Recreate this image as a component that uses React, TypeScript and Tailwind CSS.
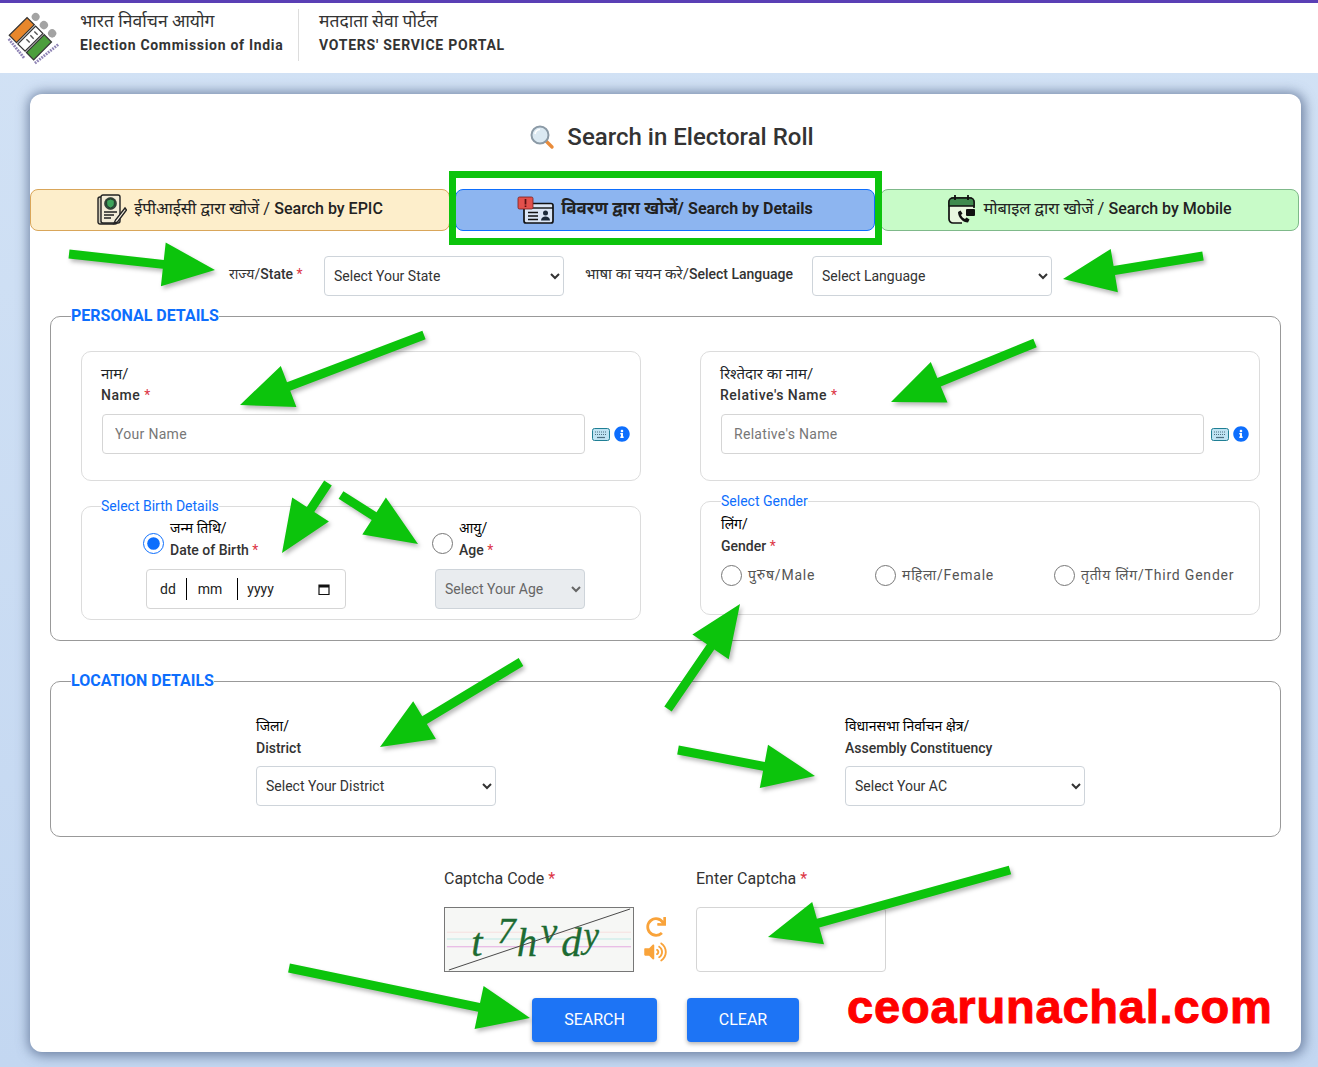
import { FaInfoCircle, FaRedo, FaVolumeUp } from "react-icons/fa";

// tail -> tip polygon for the green annotation arrows
function arrowPoints(x1: number, y1: number, x2: number, y2: number, head = 52, headW = 44, shaft = 9) {
    const len = Math.hypot(x2 - x1, y2 - y1);
    const ux = (x2 - x1) / len;
    const uy = (y2 - y1) / len;
    const nx = -uy;
    const ny = ux;
    const bx = x2 - ux * head;
    const by = y2 - uy * head;
    const pts = [
        [x1 + (nx * shaft) / 2, y1 + (ny * shaft) / 2],
        [bx + (nx * shaft) / 2, by + (ny * shaft) / 2],
        [bx + (nx * headW) / 2, by + (ny * headW) / 2],
        [x2, y2],
        [bx - (nx * headW) / 2, by - (ny * headW) / 2],
        [bx - (nx * shaft) / 2, by - (ny * shaft) / 2],
        [x1 - (nx * shaft) / 2, y1 - (ny * shaft) / 2],
    ];
    return pts.map((p) => p.map((n) => n.toFixed(1)).join(",")).join(" ");
}

const ARROWS = [
    [69, 254, 215, 270],
    [1203, 256, 1063, 279],
    [424, 335, 240, 405],
    [1035, 343, 891, 402],
    [328, 483, 282, 553],
    [341, 495, 418, 544],
    [521, 662, 380, 747],
    [668, 709, 740, 604],
    [678, 750, 815, 776],
    [1010, 870, 768, 937],
    [289, 968, 530, 1018],
];

function Req() {
    return <span className="text-[#dc3545] font-normal"> *</span>;
}

function Logo() {
    return (
        <svg viewBox="0 0 60 60" className="w-[56px] h-[56px] shrink-0">
            <g transform="rotate(45 30 30)">
                <circle cx="16" cy="12" r="4.200" fill="#a3a3a3" />
                <circle cx="28.500" cy="12" r="4.400" fill="#a3a3a3" />
                <circle cx="41" cy="12" r="4.400" fill="#a3a3a3" />
                <rect x="10" y="19" width="11" height="27" fill="#e8872c" stroke="#333" strokeWidth="1.300" />
                <rect x="23" y="19" width="11" height="27" fill="#fff" stroke="#333" strokeWidth="1.300" />
                <path d="M26 24 h5 M26 30 h5 M26 36 h5" stroke="#555" strokeWidth="1.500" />
                <rect x="36" y="19" width="11" height="27" fill="#4c9e3c" stroke="#333" strokeWidth="1.300" />
            </g>
            <path d="M4 31 L21 52 M32 57 L57 37" stroke="#8f84b5" strokeWidth="3" strokeDasharray="2 1" fill="none" />
        </svg>
    );
}

function SearchGlass() {
    return (
        <svg viewBox="0 0 26 26" className="w-[26px] h-[26px]">
            <path d="M16 16 L23 23" stroke="#e98b3a" strokeWidth="3.400" strokeLinecap="round" />
            <circle cx="11" cy="11" r="8.500" fill="#dbe9f2" stroke="#8b9aa6" strokeWidth="2" />
            <path d="M6 10 A5.500 5.500 0 0 1 11 5.500" stroke="#fff" strokeWidth="1.600" fill="none" />
        </svg>
    );
}

function EpicIcon() {
    return (
        <svg viewBox="0 0 30 32" className="w-[30px] h-[32px] shrink-0" fill="none" stroke="#222" strokeWidth="1.400">
            <rect x="1" y="3" width="19" height="27" rx="2" fill="#cfcab8" />
            <rect x="4" y="1" width="19" height="28" rx="2" fill="#f3ecd8" />
            <circle cx="13.500" cy="9.500" r="6" fill="#2e4f3d" strokeWidth="0.600" />
            <path d="M13.500 5 l3.800 1.400 v3.400 c0 2.200-1.700 3.400-3.800 4.200 c-2.100-.8-3.800-2-3.800-4.200 v-3.400z" fill="#3da35a" strokeWidth="0.700" />
            <path d="M7 18 h13 M7 21 h10 M7 24 h7" />
            <path d="M28 14 L18.500 26 l-1.500 3.500 l3.500-1.500 L29.500 16z" fill="#f6f0e0" />
        </svg>
    );
}

function DetailsIcon() {
    return (
        <svg viewBox="0 0 37 28" className="w-[37px] h-[28px] shrink-0" fill="none">
            <rect x="7" y="7.500" width="29" height="19.500" rx="2" fill="#dbe6f5" stroke="#111" strokeWidth="1.700" />
            <path d="M7 12 h29" stroke="#111" strokeWidth="1.400" />
            <path d="M11 16.500 h10 M11 20 h10 M11 23.500 h10" stroke="#111" strokeWidth="1.500" />
            <circle cx="28.500" cy="17" r="2.500" fill="#1c2a3a" />
            <path d="M24 24.500 c0-5.500 9-5.500 9 0z" fill="#1c2a3a" />
            <rect x="1" y="1" width="15" height="12" rx="1.500" fill="#e2504c" stroke="#7a1f1d" strokeWidth="0.800" />
            <path d="M8.500 3 v5.500 M8.500 9.500 v1.600" stroke="#5a0f0f" strokeWidth="1.700" />
        </svg>
    );
}

function MobileIcon() {
    return (
        <svg viewBox="0 0 29 30" className="w-[29px] h-[30px] shrink-0" fill="none">
            <path d="M15 28 H6 a4 4 0 0 1-4-4 V7 a4 4 0 0 1 4-4 h17 a4 4 0 0 1 4 4 v6" fill="#e9f7df" stroke="#111" strokeWidth="1.700" />
            <path d="M2 11 V7 a4 4 0 0 1 4-4 h17 a4 4 0 0 1 4 4 v4z" fill="#3f8a4e" stroke="#111" strokeWidth="1.300" />
            <path d="M8 0 v5 M21 0 v5" stroke="#111" strokeWidth="1.800" />
            <path d="M11 17 l2.500-1.500 2 3 -1.500 1.500 c1 2 2 3 4 4 l1.500-1.500 3 2 -1.500 3 c-5 0-10-5-10-10.500z" fill="#111" />
            <rect x="19" y="14" width="9" height="7" rx="1" fill="#111" />
        </svg>
    );
}

function KeyboardIcon() {
    return (
        <svg viewBox="0 0 18 13" className="w-[18px] h-[13px] shrink-0">
            <rect x="0.500" y="0.500" width="17" height="12" rx="2" fill="#bfe3f2" stroke="#1f7f95" />
            <path d="M3 4 h12 M3 6.500 h12" stroke="#4d6f80" strokeWidth="1.200" strokeDasharray="1 1" />
            <path d="M5 9.500 h8" stroke="#4d6f80" strokeWidth="1.200" />
        </svg>
    );
}

function CaptchaImage() {
    return (
        <svg viewBox="0 0 190 65" className="w-[190px] h-[65px] shrink-0 border border-[#777] bg-[#f6f7f5]">
            <path d="M0 25 h190" stroke="#f7dede" />
            <path d="M0 32 h190" stroke="#bfe8e4" />
            <path d="M0 40 h190" stroke="#e3a6e0" />
            <g fill="#1d6b32" stroke="#1d6b32" strokeWidth="0.300" fontFamily="'Liberation Serif', serif" fontStyle="italic">
                <text x="25" y="50" fontSize="42">t</text>
                <text x="52" y="36" fontSize="38">7</text>
                <text x="72" y="50" fontSize="42">h</text>
                <text x="97" y="36" fontSize="38">v</text>
                <text x="118" y="50" fontSize="42">d</text>
                <text x="141" y="40" fontSize="36">y</text>
            </g>
            <path d="M2 64 L189 1" stroke="#444" strokeWidth="1" />
        </svg>
    );
}

function NameCard({ hi, en, placeholder }: { hi: string; en: string; placeholder: string }) {
    return (
        <div className="h-[130px] rounded-[10px] border border-[#dcdcdc] pl-[19px] pr-[10px] pt-[11px]">
            <p className="text-[15px] leading-[22px] text-[#212529]">{hi}</p>
            <p className="text-[14px] leading-[20px] font-medium tracking-[0.5px] text-[#333]">
                {en}
                <Req />
            </p>
            <div className="flex items-center mt-[9px] ml-px">
                <input
                    placeholder={placeholder}
                    className="w-[484px] h-10 rounded-[4px] border border-[#d5d5d5] px-3 text-[14px] tracking-[0.3px] placeholder:text-[#777] outline-none"
                />
                <span className="ml-[7px] mr-1">
                    <KeyboardIcon />
                </span>
                <FaInfoCircle className="w-4 h-4 text-[#0d6efd]" />
            </div>
        </div>
    );
}

function StyledSelect({ label }: { label: string }) {
    return (
        <select className="w-[240px] h-10 rounded-[4px] border border-[#ced4da] bg-white px-[5px] text-[14px] text-[#333] outline-none">
            <option>{label}</option>
        </select>
    );
}

function Radio({ checked, label }: { checked?: boolean; label: string }) {
    return (
        <label className="flex items-center gap-[6px] text-[14px] tracking-[0.8px] text-[#555]">
            <input type="radio" readOnly checked={!!checked} className="w-[21px] h-[21px] m-0 accent-[#0d6efd]" />
            {label}
        </label>
    );
}

const tabClass = "flex items-center justify-center gap-[7px] h-[42px] rounded-[8px] border text-[16px] text-[#222]";

export default function App() {
    return (
        <div className="relative w-[1318px] h-[1067px] overflow-hidden bg-gradient-to-b from-[#d2e2f5] to-[#c3d7f1] font-['Roboto','Noto_Sans',sans-serif]">
            {/* header */}
            <header className="flex items-center h-[73px] border-t-[3px] border-[#5a3fb5] bg-white pl-[5px]">
                <Logo />
                <div className="ml-[19px] w-[219px] h-[52px] mb-[7px] pb-[3px] border-r border-[#ddd] flex flex-col justify-center">
                    <p className="text-[17.500px] leading-6 text-[#333]">भारत निर्वाचन आयोग</p>
                    <p className="text-[14px] leading-6 font-bold tracking-[0.7px] text-[#333]">Election Commission of India</p>
                </div>
                <div className="ml-5 mb-[10px]">
                    <p className="text-[17.500px] leading-6 text-[#333]">मतदाता सेवा पोर्टल</p>
                    <p className="text-[14px] leading-6 font-bold tracking-[0.75px] text-[#333]">VOTERS' SERVICE PORTAL</p>
                </div>
            </header>

            {/* main card */}
            <main className="pl-[30px] pt-[21px]">
                <div className="w-[1271px] h-[958px] rounded-[12px] bg-white shadow-[1px_1px_12px_3px_rgba(85,105,140,0.75)]">
                    <div className="flex items-center justify-center gap-3 h-[95px] pl-3 pb-[10px]">
                        <SearchGlass />
                        <h1 className="text-[24px] font-medium text-[#333]">Search in Electoral Roll</h1>
                    </div>

                    {/* tabs */}
                    <div className="flex h-[42px] w-[1269px]">
                        <div className={`${tabClass} w-[420px] bg-[#fdeecb] border-[#d9a65a]`}>
                            <EpicIcon />
                            <span className="pb-[2px]">
                                <span className="text-[16.500px]">ईपीआईसी द्वारा खोजें / </span>
                                <span className="font-medium">Search by EPIC</span>
                            </span>
                        </div>
                        <div className={`${tabClass} w-[420px] ml-[5px] bg-[#8db5f0] border-[#0d6efd] font-bold text-[#111]`}>
                            <DetailsIcon />
                            <span className="pb-[2px]">
                                <span className="text-[17px]">विवरण द्वारा खोजें/ </span>Search by Details
                            </span>
                        </div>
                        <div className={`${tabClass} w-[419px] ml-[5px] bg-[#c8fbc8] border-[#7fb98a]`}>
                            <MobileIcon />
                            <span className="pb-[2px]">
                                <span className="text-[16.500px]">मोबाइल द्वारा खोजें / </span>
                                <span className="font-medium">Search by Mobile</span>
                            </span>
                        </div>
                    </div>

                    {/* state + language */}
                    <div className="flex items-center h-10 mt-[25px] pl-[199px] text-[14px] text-[#333]">
                        <span className="w-[95px] -mt-1">
                            राज्य/<span className="font-medium">State</span>
                            <Req />
                        </span>
                        <StyledSelect label="Select Your State" />
                        <span className="ml-[21px] w-[227px] -mt-1">
                            <span className="text-[15px]">भाषा का चयन करे/</span>
                            <span className="font-medium">Select Language</span>
                        </span>
                        <StyledSelect label="Select Language" />
                    </div>

                    {/* personal details */}
                    <fieldset className="ml-5 mt-[11px] w-[1231px] h-[334px] rounded-[10px] border border-[#999]">
                        <legend className="ml-5 text-[16px] leading-[18px] font-bold text-[#0d6efd]">PERSONAL DETAILS</legend>
                        <div className="grid grid-cols-[560px_560px] gap-x-[59px] mt-[26px] ml-[30px]">
                            <NameCard hi="नाम/" en="Name" placeholder="Your Name" />
                            <NameCard hi="रिश्तेदार का नाम/" en="Relative's Name" placeholder="Relative's Name" />

                            <fieldset className="mt-[17px] h-[122px] rounded-[10px] border border-[#dcdcdc]">
                                <legend className="ml-[19px] text-[14px] leading-4 text-[#0d6efd]">Select Birth Details</legend>
                                <div className="flex pl-[61px] pt-[3px]">
                                    <div className="w-[289px]">
                                        <div className="flex items-center gap-[6px]">
                                            <input type="radio" readOnly checked className="w-[21px] h-[21px] m-0 mt-2 accent-[#0d6efd]" />
                                            <div className="text-[14px] leading-[22px]">
                                                <p>जन्म तिथि/</p>
                                                <p className="font-medium text-[#333]">
                                                    Date of Birth
                                                    <Req />
                                                </p>
                                            </div>
                                        </div>
                                        <div className="flex items-center w-[200px] h-10 mt-2 ml-[3px] rounded-[4px] border border-[#d5d5d5] pl-[13px] pr-[15px] text-[14px] text-[#222]">
                                            <span>dd</span>
                                            <span className="w-px h-[22px] bg-black ml-[10px] mr-[11px]" />
                                            <span>mm</span>
                                            <span className="w-px h-[22px] bg-black ml-[15px] mr-[9px]" />
                                            <span>yyyy</span>
                                            <svg viewBox="0 0 12 12" className="ml-auto w-3 h-3">
                                                <path d="M1 2 h10 v9.500 h-10z" fill="none" stroke="#111" strokeWidth="1.200" />
                                                <rect x="1" y="2" width="10" height="2.500" fill="#111" />
                                            </svg>
                                        </div>
                                    </div>
                                    <div>
                                        <div className="flex items-center gap-[6px]">
                                            <input type="radio" readOnly checked={false} className="w-[21px] h-[21px] m-0 mt-2 accent-[#0d6efd]" />
                                            <div className="text-[14px] leading-[22px]">
                                                <p>आयु/</p>
                                                <p className="font-medium text-[#333]">
                                                    Age
                                                    <Req />
                                                </p>
                                            </div>
                                        </div>
                                        <select disabled className="w-[150px] h-10 mt-2 ml-[3px] rounded-[4px] border border-[#ced4da] bg-[#e9ecef] px-[5px] text-[14px] text-[#666]">
                                            <option>Select Your Age</option>
                                        </select>
                                    </div>
                                </div>
                            </fieldset>

                            <fieldset className="mt-3 h-[122px] rounded-[10px] border border-[#dcdcdc] pl-5">
                                <legend className="text-[14px] leading-4 text-[#0d6efd]">Select Gender</legend>
                                <div className="text-[14px] leading-[22px] pt-1">
                                    <p>लिंग/</p>
                                    <p className="font-medium text-[#333]">
                                        Gender
                                        <Req />
                                    </p>
                                </div>
                                <div className="flex mt-2">
                                    <div className="w-[154px]">
                                        <Radio label="पुरुष/Male" />
                                    </div>
                                    <div className="w-[179px]">
                                        <Radio label="महिला/Female" />
                                    </div>
                                    <Radio label="तृतीय लिंग/Third Gender" />
                                </div>
                            </fieldset>
                        </div>
                    </fieldset>

                    {/* location details */}
                    <fieldset className="ml-5 mt-[31px] w-[1231px] h-[165px] rounded-[10px] border border-[#999]">
                        <legend className="ml-5 text-[16px] leading-[18px] font-bold text-[#0d6efd]">LOCATION DETAILS</legend>
                        <div className="flex pl-[205px] mt-[25px]">
                            <div className="w-[589px]">
                                <p className="text-[14px] leading-[22px]">जिला/</p>
                                <p className="text-[14px] leading-[22px] font-medium text-[#333]">District</p>
                                <div className="mt-[7px]">
                                    <StyledSelect label="Select Your District" />
                                </div>
                            </div>
                            <div>
                                <p className="text-[14px] leading-[22px]">विधानसभा निर्वाचन क्षेत्र/</p>
                                <p className="text-[14px] leading-[22px] font-medium text-[#333]">Assembly Constituency</p>
                                <div className="mt-[7px]">
                                    <StyledSelect label="Select Your AC" />
                                </div>
                            </div>
                        </div>
                    </fieldset>

                    {/* captcha */}
                    <div className="flex pl-[414px] mt-8">
                        <div className="w-[252px]">
                            <p className="text-[16px] leading-5 text-[#333]">
                                Captcha Code
                                <Req />
                            </p>
                            <div className="flex items-center mt-[18px]">
                                <CaptchaImage />
                                <div className="flex flex-col items-center gap-[5px] ml-[10px] text-[#f9a33a]">
                                    <FaRedo className="w-[20px] h-[20px]" />
                                    <FaVolumeUp className="w-[23px] h-[20px]" />
                                </div>
                            </div>
                        </div>
                        <div>
                            <p className="text-[16px] leading-5 text-[#333]">
                                Enter Captcha
                                <Req />
                            </p>
                            <input className="block w-[190px] h-[65px] mt-[18px] rounded-[4px] border border-[#d5d5d5] outline-none" />
                        </div>
                    </div>

                    {/* buttons */}
                    <div className="flex items-center pl-[502px] mt-[26px]">
                        <button className="w-[125px] h-11 rounded-[4px] bg-[#1d74f5] text-[16px] text-white shadow-[0_2px_4px_rgba(0,0,0,0.3)]">SEARCH</button>
                        <button className="w-[112px] h-11 ml-[30px] rounded-[4px] bg-[#1d74f5] text-[16px] text-white shadow-[0_2px_4px_rgba(0,0,0,0.3)]">CLEAR</button>
                    </div>
                </div>
            </main>

            {/* watermark stamped over the card */}
            <span className="absolute left-[847px] top-[983px] text-[47px] leading-none font-bold tracking-[0.8px] font-['Liberation_Sans',sans-serif] text-[#ff0000] [-webkit-text-stroke:1px_#ff0000]">
                ceoarunachal.com
            </span>

            {/* highlight around the active tab */}
            <div className="absolute left-[449px] top-[171px] w-[433px] h-[74px] border-[7px] border-[#0cc40c] pointer-events-none" />

            {/* annotation arrows */}
            <svg viewBox="0 0 1318 1067" className="absolute left-0 top-0 w-[1318px] h-[1067px] pointer-events-none drop-shadow-[2px_3px_2px_rgba(0,0,0,0.28)]">
                {ARROWS.map(([a, b, c, d]) => (
                    <polygon key={`${a}-${b}`} points={arrowPoints(a, b, c, d)} fill="#0cc40c" />
                ))}
            </svg>
        </div>
    );
}
